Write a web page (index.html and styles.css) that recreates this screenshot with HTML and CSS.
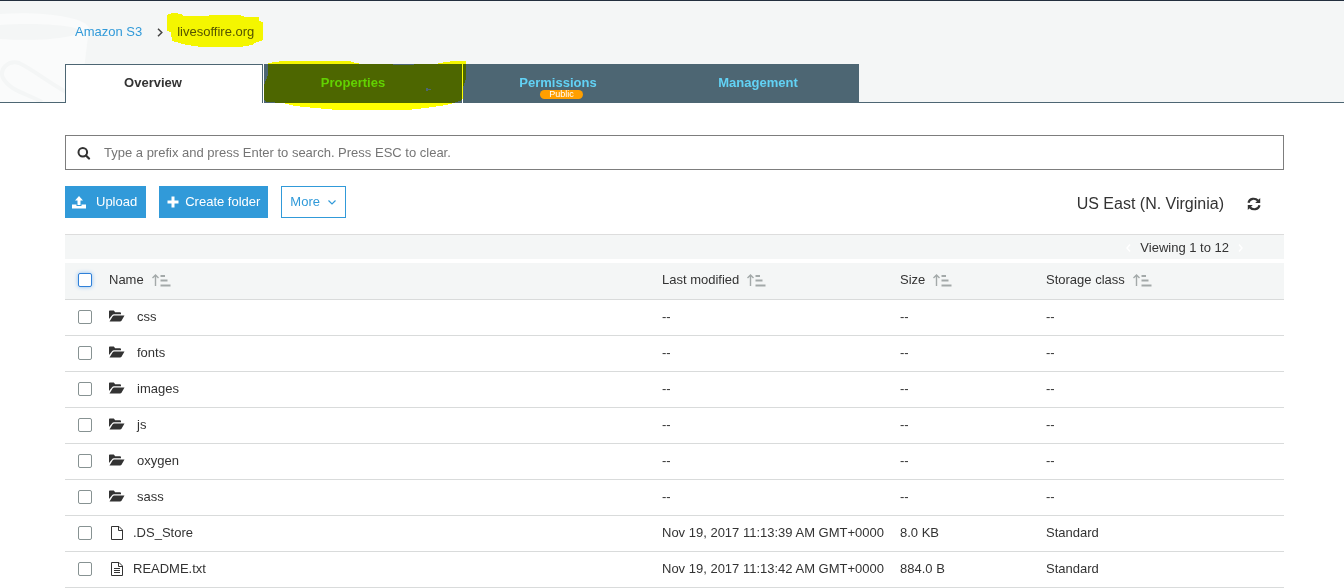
FILE: index.html
```html
<!DOCTYPE html>
<html lang="en">
<head>
<meta charset="utf-8">
<title>Amazon S3 - livesoffire.org</title>
<link rel="stylesheet" href="styles.css">
</head>
<body>
<svg class="sprite" aria-hidden="true">
  <symbol id="sort" viewBox="0 0 19 13"><path d="M3.500 12V1.500M.5 4L3.500 1L6.500 4" fill="none" stroke="#a3a9a9" stroke-width="1.400"/><path d="M8.500 2h4.500M8.500 6.500h7M8.500 11.500h10" stroke="#a3a9a9" stroke-width="1.800"/></symbol>
  <symbol id="folder" viewBox="0 0 16 12"><path d="M0 9V1.300Q0 .5 .8 .5H4.800L6.200 2.300H11Q12 2.300 12 3.200V4.300H5Q3.800 4.300 3.100 5.200Z" fill="#333"/><path d="M.5 11.500L3.700 6.300Q4.200 5.400 5.200 5.400H15.500L12.500 10.700Q12 11.500 11 11.500Z" fill="#333"/></symbol>
  <symbol id="file" viewBox="0 0 12 14"><path d="M.5 .5H8L11.500 4V13.500H.5ZM7.500 .5V4.500H11.500" fill="none" stroke="#333"/></symbol>
  <symbol id="file-text" viewBox="0 0 12 14"><path d="M.5 .5H8L11.500 4V13.500H.5ZM7.500 .5V4.500H11.500M3 6.500H9M3 8.500H9M3 10.500H9" fill="none" stroke="#333"/></symbol>
</svg>

<header class="header">
  <svg class="bucket" width="100" height="101" viewBox="0 0 100 101" aria-hidden="true">
    <path d="M0 13C40 10 86 16 89 27L80 101H0Z" fill="#fafbfb"/>
    <path d="M0 24C30 22 70 23 83 30C70 39 30 40 0 38Z" fill="#f4f6f6"/>
    <path d="M42 101C28 93 10 90 3 77C-1 68 8 59 19 62C32 68 45 79 66 91" fill="none" stroke="#f4f6f6" stroke-width="4"/>
  </svg>
  <nav class="crumbs" aria-label="Breadcrumb">
    <a class="crumb-link" href="#">Amazon S3</a>
    <svg class="crumb-arrow" width="6" height="9" viewBox="0 0 6 9" aria-hidden="true"><path d="M1 .8L4.800 4.500L1 8.200" fill="none" stroke="#444" stroke-width="1.500"/></svg>
    <span class="crumb-current">livesoffire.org</span>
  </nav>
  <div class="tabs" role="tablist">
    <button class="tab tab-active" role="tab" aria-selected="true">Overview</button>
    <button class="tab tab-divided tab-properties" role="tab" aria-selected="false">Properties</button>
    <button class="tab tab-divided tab-permissions" role="tab" aria-selected="false">Permissions<span class="badge">Public</span></button>
    <button class="tab" role="tab" aria-selected="false">Management</button>
  </div>
  <svg class="marker" width="480" height="115" viewBox="0 0 480 115" aria-hidden="true">
    <path d="M167 15L168 14L174 13L181 14L184 16H208L210 15H240L245 17H259V21L263 22V40L255 43L252 45L240 47H201L187 45L172 41L171 32L167 31Z" fill="#ff0"/>
    <path fill-rule="evenodd" d="M268 64V63L283 61H350L355 63L362 64H393V65H414V64H435L445 62L455 61H466V79L463 88V98L460 101L450 104L440 106L425 108L408 110H337L315 108L295 106L283 103L266 102L264 99V85L267 78L268 75ZM426 88V91H428V90H431V89H428V88Z" fill="#ff0"/>
  </svg>
</header>

<main class="content">
  <div class="search">
    <svg width="14" height="14" viewBox="0 0 14 14" aria-hidden="true"><circle cx="5.800" cy="6.300" r="4.300" fill="none" stroke="#333" stroke-width="2"/><path d="M9 9.500L12 12.500" stroke="#333" stroke-width="2.200" stroke-linecap="round"/></svg>
    <input class="search-input" type="search" aria-label="Search by prefix" placeholder="Type a prefix and press Enter to search. Press ESC to clear.">
  </div>

  <div class="actions">
    <button class="btn btn-upload"><svg width="14" height="13" viewBox="0 0 14 13" aria-hidden="true"><path d="M7 0L11 4.500H8.500V9H5.500V4.500H3ZM0 8.500H4.500V10H9.500V8.500H14V12.500H0Z" fill="#fff"/></svg>Upload</button>
    <button class="btn btn-create"><svg width="12" height="12" viewBox="0 0 12 12" aria-hidden="true"><path d="M4.500 .5h3v4h4v3h-4v4h-3v-4h-4v-3h4z" fill="#fff"/></svg>Create folder</button>
    <button class="btn btn-more">More<svg width="8" height="5" viewBox="0 0 8 5" aria-hidden="true"><path d="M.5 .5L4 4L7.500 .5" fill="none" stroke="#319ad9" stroke-width="1.200"/></svg></button>
    <span class="region">US East (N. Virginia)</span>
    <button class="refresh" aria-label="Refresh"><svg width="14" height="14" viewBox="0 0 14 14" aria-hidden="true"><path d="M1.500 5.800C2.500 1.300 8 .6 11 3.600M12.500 8.200C11.500 12.700 6 13.400 3 10.400" fill="none" stroke="#333" stroke-width="2.200"/><path d="M13.200 1V6H8.200ZM.8 13V8H5.800Z" fill="#333"/></svg></button>
  </div>

  <div class="pager">
    <svg width="5" height="8" viewBox="0 0 5 8" aria-hidden="true"><path d="M4 .5L1 4L4 7.500" fill="none" stroke="#fff" stroke-width="1.500"/></svg>
    <span>Viewing 1 to 12</span>
    <svg width="5" height="8" viewBox="0 0 5 8" aria-hidden="true"><path d="M1 .5L4 4L1 7.500" fill="none" stroke="#fff" stroke-width="1.500"/></svg>
  </div>

  <table class="objects">
    <colgroup><col class="col-check"><col><col class="col-wide"><col class="col-size"><col class="col-wide"></colgroup>
    <thead>
      <tr>
        <th class="check"><input class="box box-focus" type="checkbox" aria-label="Select all"></th>
        <th>Name<svg class="sort" width="19" height="13" aria-hidden="true"><use href="#sort"/></svg></th>
        <th>Last modified<svg class="sort" width="19" height="13" aria-hidden="true"><use href="#sort"/></svg></th>
        <th>Size<svg class="sort" width="19" height="13" aria-hidden="true"><use href="#sort"/></svg></th>
        <th>Storage class<svg class="sort" width="19" height="13" aria-hidden="true"><use href="#sort"/></svg></th>
      </tr>
    </thead>
    <tbody>
      <tr><td class="check"><input class="box" type="checkbox" aria-label="Select css"></td><td><svg class="folder" width="16" height="12" aria-hidden="true"><use href="#folder"/></svg>css</td><td>--</td><td>--</td><td>--</td></tr>
      <tr><td class="check"><input class="box" type="checkbox" aria-label="Select fonts"></td><td><svg class="folder" width="16" height="12" aria-hidden="true"><use href="#folder"/></svg>fonts</td><td>--</td><td>--</td><td>--</td></tr>
      <tr><td class="check"><input class="box" type="checkbox" aria-label="Select images"></td><td><svg class="folder" width="16" height="12" aria-hidden="true"><use href="#folder"/></svg>images</td><td>--</td><td>--</td><td>--</td></tr>
      <tr><td class="check"><input class="box" type="checkbox" aria-label="Select js"></td><td><svg class="folder" width="16" height="12" aria-hidden="true"><use href="#folder"/></svg>js</td><td>--</td><td>--</td><td>--</td></tr>
      <tr><td class="check"><input class="box" type="checkbox" aria-label="Select oxygen"></td><td><svg class="folder" width="16" height="12" aria-hidden="true"><use href="#folder"/></svg>oxygen</td><td>--</td><td>--</td><td>--</td></tr>
      <tr><td class="check"><input class="box" type="checkbox" aria-label="Select sass"></td><td><svg class="folder" width="16" height="12" aria-hidden="true"><use href="#folder"/></svg>sass</td><td>--</td><td>--</td><td>--</td></tr>
      <tr><td class="check"><input class="box" type="checkbox" aria-label="Select .DS_Store"></td><td><svg class="file" width="12" height="14" aria-hidden="true"><use href="#file"/></svg>.DS_Store</td><td>Nov 19, 2017 11:13:39 AM GMT+0000</td><td>8.0 KB</td><td>Standard</td></tr>
      <tr><td class="check"><input class="box" type="checkbox" aria-label="Select README.txt"></td><td><svg class="file" width="12" height="14" aria-hidden="true"><use href="#file-text"/></svg>README.txt</td><td>Nov 19, 2017 11:13:42 AM GMT+0000</td><td>884.0 B</td><td>Standard</td></tr>
    </tbody>
  </table>
</main>
</body>
</html>
```

FILE: styles.css
```css
* { box-sizing: border-box; }
html { background: #fff; }
body {
  margin: 0;
  color: #333;
  font: 13px/16px "Liberation Sans", Arial, sans-serif;
}
button, input { font: inherit; }
button { cursor: pointer; }
.sprite { position: absolute; width: 0; height: 0; }

.header {
  position: relative;
  padding: 23px 65px 0;
  border-top: 1px solid #232f3e;
  background: linear-gradient(#4d6673, #4d6673) bottom / 100% 1px no-repeat #f4f6f6;
}
.bucket { position: absolute; left: 0; top: 0; }
.crumbs {
  position: relative;
  display: flex;
  align-items: center;
  padding-left: 10px;
}
.crumb-link { color: #319ad9; text-decoration: none; }
.crumb-arrow { margin: 0 14px 0 15px; }
.crumb-current { color: #555; }
.tabs {
  position: relative;
  display: flex;
  margin-top: 24px;
}
.tab {
  width: 198px;
  height: 39px;
  padding: 0 4px 2px 0;
  border: 0;
  background: #4d6673;
  color: #62d2f5;
  font-weight: bold;
}
.tab-active {
  border: 1px solid #4d6673;
  border-bottom: 0;
  background: #fff;
  color: #333;
  padding-right: 22px;
}
.tab-divided { width: 199px; border-left: 1px solid #fff; }
.tab-properties { padding-right: 20px; }
.tab-permissions { position: relative; padding-right: 8px; }
.badge {
  position: absolute;
  left: 77px;
  top: 26px;
  width: 43px;
  border-radius: 5px;
  background: #ff9f00;
  color: #fff;
  font-size: 9px;
  font-weight: normal;
  line-height: 9px;
}
.marker {
  position: absolute;
  left: 0;
  top: -1px;
  mix-blend-mode: multiply;
  pointer-events: none;
  shape-rendering: crispEdges;
}

.content { padding: 32px 60px 0 65px; }
.search {
  display: flex;
  align-items: center;
  height: 35px;
  padding-left: 11px;
  border: 1px solid #7d7d7d;
}
.search-input {
  flex: 1;
  margin-left: 13px;
  padding: 0;
  border: 0;
  outline: 0;
  appearance: none;
}
.search-input::placeholder { color: #757575; }

.actions {
  display: flex;
  align-items: center;
  margin-top: 16px;
}
.btn {
  display: flex;
  align-items: center;
  height: 32px;
  margin-right: 13px;
  padding: 0 8px;
  border: 1px solid #319ad9;
  background: #319ad9;
  color: #fff;
  white-space: nowrap;
}
.btn-upload { gap: 10px; padding: 0 8px 0 6px; }
.btn-create { gap: 6px; padding: 0 7px; }
.btn-more { gap: 8px; padding: 0 9px 0 8px; background: #fff; color: #319ad9; }
.region { margin: 4px 0 0 auto; font-size: 16px; line-height: 20px; }
.refresh {
  display: flex;
  margin: 4px 23px 0;
  padding: 0;
  border: 0;
  background: none;
}

.pager {
  display: flex;
  align-items: center;
  justify-content: flex-end;
  gap: 9px;
  height: 25px;
  margin: 16px 0 4px;
  padding: 1px 41px 0 0;
  border-top: 1px solid #ddd;
  background: #f4f6f6;
}

.objects {
  width: 100%;
  border-collapse: separate;
  border-spacing: 0;
  table-layout: fixed;
}
.col-check { width: 44px; }
.col-wide { width: 238px; }
.col-size { width: 146px; }
.objects th, .objects td {
  height: 36px;
  padding: 0 0 2px;
  border-bottom: 1px solid #d9dbdb;
  font-weight: normal;
  text-align: left;
  white-space: nowrap;
}
.objects th { height: 37px; padding-bottom: 3px; background: #f4f6f6; }
.objects .check { padding: 0 0 2px 13px; }
.sort { margin-left: 8px; vertical-align: -3px; }
.folder { margin-right: 12px; vertical-align: -1px; }
.file { margin: 0 10px 0 2px; vertical-align: -3px; }
.box {
  display: block;
  width: 14px;
  height: 14px;
  margin: 0;
  border: 1px solid #879292;
  border-radius: 2px;
  background: #fff;
  appearance: none;
}
.box-focus { border-color: #2f80d8; box-shadow: 0 0 4px #8dbdf0; }
```
